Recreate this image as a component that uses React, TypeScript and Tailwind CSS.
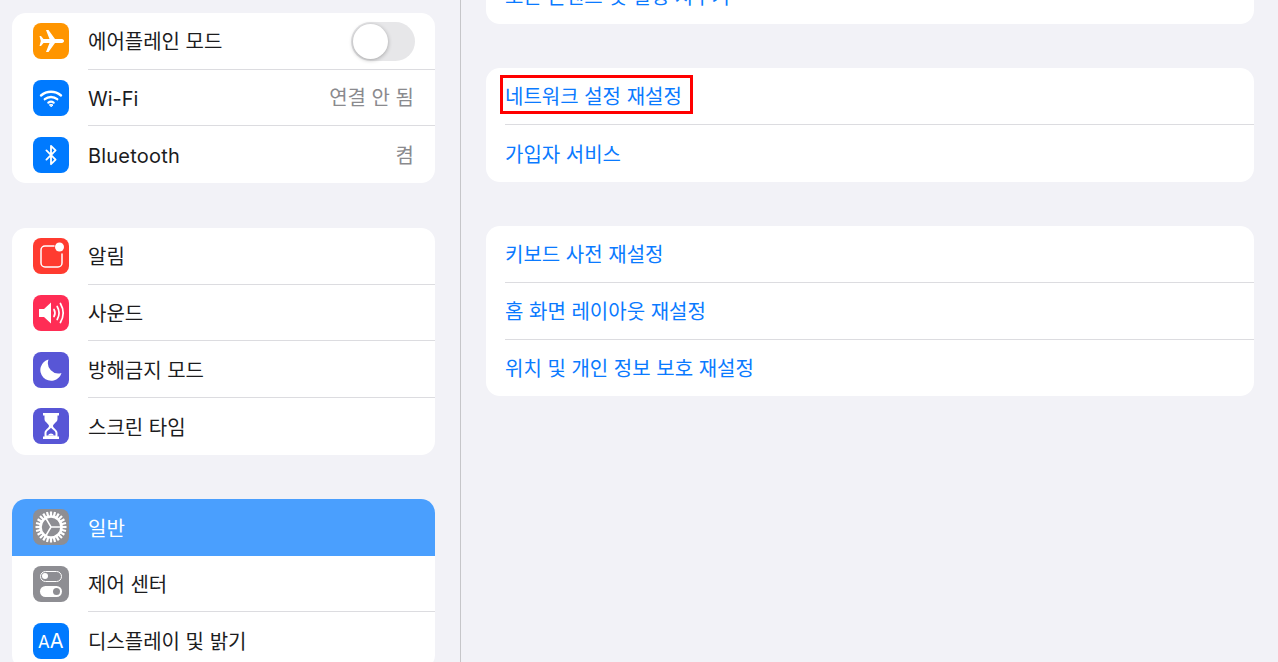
import React from "react";
import { Bluetooth } from "lucide-react";

const FONT = "font-['Inter','Noto_Sans_CJK_KR',sans-serif]";

const IconBox = ({ color, children }: { color: string; children: React.ReactNode }) => (
  <div className={`w-9 h-9 rounded-lg shrink-0 flex items-center justify-center ${color}`}>{children}</div>
);

const Row = ({
  icon,
  label,
  value,
  toggle,
  active,
  last,
}: {
  icon: React.ReactNode;
  label: string;
  value?: string;
  toggle?: boolean;
  active?: boolean;
  last?: boolean;
}) => (
  <div className={`flex h-[56.67px] items-center pl-[20.8px] ${active ? "bg-[#4a9ffe]" : ""}`}>
    {icon}
    <div
      className={`ml-[19.2px] flex-1 h-full flex items-center justify-between pr-[21px] ${
        last || active ? "" : "border-b border-[#dcdce0]"
      }`}
    >
      <span className={`pt-[3px] text-[20px] ${active ? "text-white" : "text-[#1c1c1e]"} ${label === "Bluetooth" ? "tracking-[0.2px]" : ""}`}>
        {label}
      </span>
      {value && <span className="pt-[2px] text-[20px] text-[#8a8a8e]">{value}</span>}
      {toggle && (
        <div className="w-[64px] h-[39px] rounded-full bg-[#e7e7e9] p-[2px] -mr-[1px] mt-[2px]">
          <div className="w-[35px] h-[35px] rounded-full bg-white shadow-[0_1px_4px_rgba(0,0,0,0.3)]" />
        </div>
      )}
    </div>
  </div>
);

const PlaneIcon = () => (
  <svg width="36" height="36" viewBox="0 0 36 36">
    <path
      d="M31 18c0-1.400-1.500-2-3-2h-6L15.500 7H13l3.500 9h-6L8 13H6.500l1.300 5-1.300 5H8l2.500-3h6L13 29h2.500l6.500-9h6c1.500 0 3-.6 3-2z"
      fill="white"
    />
  </svg>
);

const WifiIcon = () => (
  <svg width="24" height="24" viewBox="0 0 24 24" fill="none" stroke="white" strokeWidth="2.4" strokeLinecap="round">
    <path d="M2 9.500c5.800-5 14.200-5 20 0" />
    <path d="M5.800 13.200c3.600-3 8.800-3 12.400 0" />
    <path d="M9.400 16.600c1.600-1.200 3.600-1.200 5.200 0" />
    <path d="M12 20.600l-1.600-1.800c1-.6 2.200-.6 3.200 0z" fill="white" strokeWidth="1" />
  </svg>
);

const NotifIcon = () => (
  <svg width="36" height="36" viewBox="0 0 36 36" fill="none">
    <path
      d="M21 8H12a4 4 0 0 0-4 4v13a4 4 0 0 0 4 4h13a4 4 0 0 0 4-4v-9"
      stroke="white"
      strokeWidth="1.500"
      strokeLinecap="round"
    />
    <circle cx="26.500" cy="9" r="4.500" fill="white" />
  </svg>
);

const SoundIcon = () => (
  <svg width="36" height="36" viewBox="0 0 36 36" fill="none">
    <path d="M6 14h5l7-6.500v21L11 22H6z" fill="white" />
    <path d="M21 14.500c1.300 2.300 1.300 4.700 0 7" stroke="white" strokeWidth="1.700" strokeLinecap="round" />
    <path d="M24.200 11.500c2.300 4 2.300 9 0 13" stroke="white" strokeWidth="1.700" strokeLinecap="round" />
    <path d="M27.400 8.500c3.400 5.800 3.400 13.200 0 19" stroke="white" strokeWidth="1.700" strokeLinecap="round" />
  </svg>
);

const MoonIcon = () => (
  <svg width="36" height="36" viewBox="0 0 36 36">
    <path d="M15.500 7.500A10.800 10.800 0 1 0 28.500 21 A10.500 10.500 0 0 1 15.500 7.500z" fill="white" />
  </svg>
);

const HourglassIcon = () => (
  <svg width="36" height="36" viewBox="0 0 36 36">
    <path
      d="M10 5h16v2.500h-1.500V11c0 3.200-4.500 4.800-4.500 7s4.500 3.800 4.500 7v3.500H26V31H10v-2.500h1.500V25c0-3.200 4.500-4.800 4.500-7s-4.500-3.800-4.500-7V7.500H10z"
      fill="white"
    />
    <path
      d="M13.500 27.500V25c0-2.200 3.400-3.700 4.500-5.300 1.100 1.600 4.500 3.100 4.500 5.300v2.500z"
      fill="#5856d6"
    />
    <path d="M15 27.500c.4-1.200 1.800-2 3-2s2.600.8 3 2z" fill="white" />
  </svg>
);

const GearIcon = () => {
  const teeth = Array.from({ length: 24 }, (_, i) => i * 15);
  return (
    <svg width="36" height="36" viewBox="0 0 36 36" fill="none">
      {teeth.map((a) => (
        <rect key={a} x="16.900" y="2.500" width="2.200" height="5" fill="white" transform={`rotate(${a} 18 18)`} />
      ))}
      <circle cx="18" cy="18" r="10.500" stroke="white" strokeWidth="2.600" />
      <path d="M18 18H28M18 18L13 9.500M18 18L13 26.500" stroke="white" strokeWidth="1.500" />
    </svg>
  );
};

const ControlIcon = () => (
  <div className="w-[22px] flex flex-col gap-[4px]">
    <div className="h-[11px] rounded-full border-[1.5px] border-white flex items-center px-[1px]">
      <div className="w-[6px] h-[6px] rounded-full bg-white" />
    </div>
    <div className="h-[11px] rounded-full bg-white flex items-center justify-end px-[2px]">
      <div className="w-[7px] h-[7px] rounded-full bg-[#8e8e93]" />
    </div>
  </div>
);

const Group = ({ children, className = "" }: { children: React.ReactNode; className?: string }) => (
  <div className={`bg-white rounded-[14px] overflow-hidden ${className}`}>{children}</div>
);

const LinkRow = ({ label, last, boxed }: { label: string; last?: boolean; boxed?: boolean }) => (
  <div className="pl-[19px] h-[56.8px]">
    <div className={`relative h-full flex items-center ${last ? "" : "border-b border-[#dcdce0]"}`}>
      <span className="pt-[3px] text-[20px] text-[#0a7aff]">{label}</span>
      {boxed && (
        <div className="absolute left-[-5px] top-[7px] w-[193px] h-[39px] border-[3px] border-[#ff0000]" />
      )}
    </div>
  </div>
);

export default function App() {
  return (
    <div className={`w-[1278px] h-[662px] overflow-hidden flex bg-[#f2f2f7] ${FONT}`}>
      <aside className="w-[461px] h-full border-r border-[#c6c6c9] pl-3 pr-[25px] pt-[13px] overflow-hidden shrink-0">
        <Group>
          <Row label="에어플레인 모드" toggle icon={<IconBox color="bg-[#ff9500]"><PlaneIcon /></IconBox>} />
          <Row label="Wi-Fi" value="연결 안 됨" icon={<IconBox color="bg-[#007aff]"><WifiIcon /></IconBox>} />
          <Row
            label="Bluetooth"
            value="켬"
            last
            icon={
              <IconBox color="bg-[#007aff]">
                <Bluetooth size={22} stroke="white" strokeWidth={2} />
              </IconBox>
            }
          />
        </Group>
        <Group className="mt-[45px]">
          <Row label="알림" icon={<IconBox color="bg-[#ff3b30]"><NotifIcon /></IconBox>} />
          <Row label="사운드" icon={<IconBox color="bg-[#ff2d55]"><SoundIcon /></IconBox>} />
          <Row label="방해금지 모드" icon={<IconBox color="bg-[#5856d6]"><MoonIcon /></IconBox>} />
          <Row label="스크린 타임" last icon={<IconBox color="bg-[#5856d6]"><HourglassIcon /></IconBox>} />
        </Group>
        <Group className="mt-[44.3px]">
          <Row label="일반" active icon={<IconBox color="bg-[#8e8e93]"><GearIcon /></IconBox>} />
          <Row label="제어 센터" icon={<IconBox color="bg-[#8e8e93]"><ControlIcon /></IconBox>} />
          <Row
            label="디스플레이 및 밝기"
            icon={
              <IconBox color="bg-[#007aff]">
                <span className="text-white text-[20px] leading-none font-normal">
                  <span className="text-[17px]">A</span>A
                </span>
              </IconBox>
            }
          />
        </Group>
      </aside>
      <main className="flex-1 pl-[25px] pr-[24px] -mt-[33px]">
        <Group>
          <LinkRow label="모든 콘텐츠 및 설정 지우기" last />
        </Group>
        <Group className="mt-[44.2px]">
          <LinkRow label="네트워크 설정 재설정" boxed />
          <LinkRow label="가입자 서비스" last />
        </Group>
        <Group className="mt-[44.4px]">
          <LinkRow label="키보드 사전 재설정" />
          <LinkRow label="홈 화면 레이아웃 재설정" />
          <LinkRow label="위치 및 개인 정보 보호 재설정" last />
        </Group>
      </main>
    </div>
  );
}
